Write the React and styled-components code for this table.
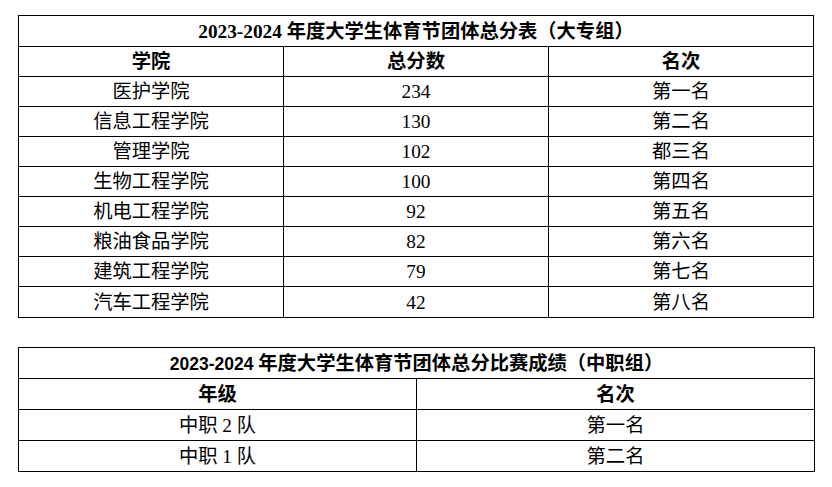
import styled, { createGlobalStyle } from 'styled-components';

const GlobalStyle = createGlobalStyle`
    body {
        margin: 0;
        background: #ffffff;
    }
`

const daZhuan = [
    ['医护学院', '234', '第一名'],
    ['信息工程学院', '130', '第二名'],
    ['管理学院', '102', '都三名'],
    ['生物工程学院', '100', '第四名'],
    ['机电工程学院', '92', '第五名'],
    ['粮油食品学院', '82', '第六名'],
    ['建筑工程学院', '79', '第七名'],
    ['汽车工程学院', '42', '第八名'],
];

const zhongZhi = [
    ['中职 2 队', '第一名'],
    ['中职 1 队', '第二名'],
];

const App = () => {
    return (
        <Page>
            <GlobalStyle />
            <ScoreTable>
                <tbody>
                    <TitleRow>
                        <TitleCell colSpan={3}>
                            <Year>2023-2024</Year> 年度大学生体育节团体总分表（大专组）
                        </TitleCell>
                    </TitleRow>
                    <Row>
                        <HeadCell $w="33.33%">学院</HeadCell>
                        <HeadCell $w="33.33%">总分数</HeadCell>
                        <HeadCell>名次</HeadCell>
                    </Row>
                    {daZhuan.map((r, i) => (
                        <Row key={i} $h={i === 7 ? 31 : 30}>
                            <Cell>{r[0]}</Cell>
                            <Cell>{r[1]}</Cell>
                            <Cell>{r[2]}</Cell>
                        </Row>
                    ))}
                </tbody>
            </ScoreTable>

            <ScoreTable $wide>
                <tbody>
                    <TitleRow>
                        <TitleCell colSpan={2}>
                            <Year $sans>2023-2024</Year> 年度大学生体育节团体总分比赛成绩（中职组）
                        </TitleCell>
                    </TitleRow>
                    <Row $h={31}>
                        <HeadCell $w="50%">年级</HeadCell>
                        <HeadCell>名次</HeadCell>
                    </Row>
                    {zhongZhi.map((r, i) => (
                        <Row key={i} $h={31}>
                            <Cell>{r[0]}</Cell>
                            <Cell>{r[1]}</Cell>
                        </Row>
                    ))}
                </tbody>
            </ScoreTable>
        </Page>
    );
};

const Page = styled.div`
    display: flex;
    flex-direction: column;
    align-items: flex-start;
    gap: 29px;
    padding: 15px 0 0 18px;
    font-family: "Liberation Serif", "Noto Sans CJK SC", serif;
    color: #000;
`

const ScoreTable = styled.table`
    width: ${({ $wide }) => $wide ? 797 : 796}px;
    border-collapse: collapse;
    table-layout: fixed;
`

const TitleRow = styled.tr`
    height: 31px;
`

const Row = styled.tr`
    height: ${({ $h }) => $h || 30}px;
`

const TitleCell = styled.td`
    border: 1px solid #000;
    padding: 1px 0 0;
    text-align: center;
    font-size: 19.3px;
    font-weight: 700;
    line-height: 1;
`

const Year = styled.span`
    font-family: ${({ $sans }) => $sans ? '"Liberation Sans", sans-serif' : '"Liberation Serif", serif'};
    font-size: ${({ $sans }) => $sans ? '17.5px' : '19.3px'};
    font-weight: 700;
`

const HeadCell = styled.td`
    width: ${({ $w }) => $w || 'auto'};
    border: 1px solid #000;
    padding: 1px 0 0;
    text-align: center;
    font-size: 19.3px;
    font-weight: 700;
    line-height: 1;
`

const Cell = styled.td`
    border: 1px solid #000;
    padding: 1px 0 0;
    text-align: center;
    font-size: 19.3px;
    font-weight: 400;
    line-height: 1;
`

export default App;
